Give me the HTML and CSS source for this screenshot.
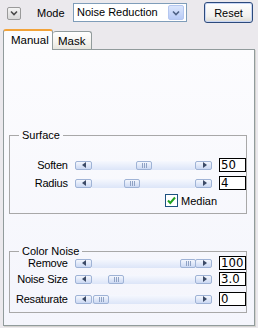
FILE: index.html
```html
<!DOCTYPE html>
<html>
<head>
<meta charset="utf-8">
<link rel="stylesheet" href="styles.css">
</head>
<body>
<div class="top">
  <div class="collapse"><svg width="8" height="6" viewBox="0 0 8 6"><path d="M1 1.5 L4 4.5 L7 1.5" fill="none" stroke="#4a4a4a" stroke-width="1.6"/></svg></div>
  <span class="mode">Mode</span>
  <div class="select"><span class="sel-text">Noise Reduction</span><span class="sel-btn"><svg width="8" height="6" viewBox="0 0 8 6"><path d="M1 1.5 L4 4.5 L7 1.5" fill="none" stroke="#4d6185" stroke-width="1.6"/></svg></span></div>
  <div class="reset">Reset</div>
</div>
<div class="tabs">
  <div class="tab active">Manual</div>
  <div class="tab">Mask</div>
</div>
<div class="panel">
  <fieldset class="group surface">
    <legend>Surface</legend>
    <div class="row">
      <span class="lbl">Soften</span>
      <div class="slider"><span class="arrow left"></span><span class="track"><span class="thumb" style="left:44px"></span></span><span class="arrow right"></span></div>
      <span class="num">50</span>
    </div>
    <div class="row">
      <span class="lbl">Radius</span>
      <div class="slider"><span class="arrow left"></span><span class="track"><span class="thumb" style="left:32px"></span></span><span class="arrow right"></span></div>
      <span class="num">4</span>
    </div>
    <div class="check-row">
      <span class="checkbox"><svg width="11" height="11" viewBox="0 0 11 11"><path d="M2 5.5 L4.3 8 L9 2.5" fill="none" stroke="#21a121" stroke-width="2"/></svg></span>
      <span class="check-lbl">Median</span>
    </div>
  </fieldset>
  <fieldset class="group color">
    <legend>Color Noise</legend>
    <div class="row first">
      <span class="lbl">Remove</span>
      <div class="slider"><span class="arrow left"></span><span class="track"><span class="thumb" style="left:88px"></span></span><span class="arrow right"></span></div>
      <span class="num">100</span>
    </div>
    <div class="row">
      <span class="lbl">Noise Size</span>
      <div class="slider"><span class="arrow left"></span><span class="track"><span class="thumb" style="left:16px"></span></span><span class="arrow right"></span></div>
      <span class="num">3.0</span>
    </div>
    <div class="row last">
      <span class="lbl">Resaturate</span>
      <div class="slider"><span class="arrow left"></span><span class="track"><span class="thumb" style="left:1px"></span></span><span class="arrow right"></span></div>
      <span class="num">0</span>
    </div>
  </fieldset>
</div>
</body>
</html>
```
FILE: styles.css
```css
* { box-sizing: border-box; }
html, body { margin: 0; padding: 0; }
body {
  width: 258px;
  height: 328px;
  background: #ebe9ed;
  font-family: "Liberation Sans", Arial, sans-serif;
  font-size: 11px;
  color: #000;
  overflow: hidden;
}
.top {
  display: flex;
  align-items: center;
  height: 25px;
}
.collapse {
  width: 14px;
  height: 13px;
  margin-left: 7px;
  margin-top: 1px;
  border: 1px solid #9a9a9a;
  border-radius: 2px;
  background: linear-gradient(#f4f4f4, #d8d8d8);
  display: flex;
  align-items: center;
  justify-content: center;
}
.mode {
  margin-left: 16px;
  width: 36px;
}
.select {
  width: 114px;
  height: 19px;
  border: 1px solid #7f9db9;
  background: #fff;
  display: flex;
  align-items: center;
  justify-content: space-between;
  padding: 0 2px 0 3px;
}
.sel-text { line-height: 15px; }
.sel-btn {
  width: 16px;
  height: 15px;
  border: 1px solid #b5c7f0;
  border-radius: 2px;
  background: linear-gradient(#dbe6fd, #b8cbf6);
  display: flex;
  align-items: center;
  justify-content: center;
}
.reset {
  margin-left: 17px;
  width: 49px;
  height: 21px;
  border: 1px solid #2c4a7c;
  border-radius: 3px;
  background: linear-gradient(#ffffff, #f2f1ee 70%, #dcdbd4);
  box-shadow: inset 0 0 0 1px #c8d6f4;
  display: flex;
  align-items: center;
  justify-content: center;
}
.tabs {
  display: flex;
  align-items: flex-end;
  height: 24px;
  padding-left: 3px;
  position: relative;
  z-index: 1;
}
.tab {
  height: 18px;
  border: 1px solid #919b9c;
  border-bottom: none;
  border-radius: 3px 3px 0 0;
  background: linear-gradient(#ffffff, #f4f3ef 60%, #e6e5de);
  line-height: 13px;
  font-size: 11.5px;
}
.tab.active {
  height: 21px;
  width: 50px;
  border-top: 2px solid #f2a33a;
  background: #fcfcfe;
  padding: 3px 0 0 7px;
  margin-bottom: -1px;
}
.tab:not(.active) {
  width: 39px;
  border-left: none;
  padding: 3px 0 0 5px;
}
.panel {
  margin-left: 3px;
  width: 252px;
  height: 277px;
  border: 1px solid #919b9c;
  background: linear-gradient(#fcfcfe, #f4f5fc);
  box-shadow: 1px 1px 0 #d4d3cf;
  padding-top: 79px;
}
.group {
  margin: 0 0 0 5px;
  width: 238px;
  border: 1px solid #a8a8a8;
  padding: 0;
  min-width: 0;
}
.group legend {
  margin-left: 9px;
  padding: 0 3px;
  line-height: 12px;
  font-size: 11px;
}
.surface {
  padding-top: 17px;
  padding-bottom: 6px;
}
.surface .row { margin-bottom: 4px; }
.color {
  margin-top: 32px;
  padding-bottom: 6px;
}
.color legend { line-height: 11px; }
.row {
  display: flex;
  align-items: center;
  height: 14px;
}
.row.first { margin-top: -1px; }
.color .row { margin-bottom: 2px; }
.color .row.last { margin-top: 6px; margin-bottom: 0; }
.lbl {
  width: 58px;
  text-align: right;
  letter-spacing: -0.2px;
  line-height: 11px;
}
.slider {
  margin-left: 7px;
  width: 138px;
  height: 9px;
  display: flex;
}
.arrow {
  width: 17px;
  height: 9px;
  border: 1px solid #9fb3d6;
  border-radius: 2px;
  background: linear-gradient(#f4f7fd, #cbd8f3);
  position: relative;
  flex: none;
}
.arrow::after {
  content: "";
  position: absolute;
  top: 0.5px;
  left: 6px;
  border-top: 3px solid transparent;
  border-bottom: 3px solid transparent;
}
.arrow.left::after { border-right: 4px solid #3c4a66; }
.arrow.right::after { border-left: 4px solid #3c4a66; left: 7px; }
.track {
  flex: 1;
  position: relative;
  background: linear-gradient(#f6f8fe, #dce5f8);
}
.thumb {
  position: absolute;
  top: 0;
  width: 16px;
  height: 9px;
  border: 1px solid #9fb3d6;
  border-radius: 2px;
  background:
    linear-gradient(90deg, transparent 5px, #8fa2c4 5px, #8fa2c4 6px, transparent 6px, transparent 7px, #8fa2c4 7px, #8fa2c4 8px, transparent 8px, transparent 9px, #8fa2c4 9px, #8fa2c4 10px, transparent 10px) no-repeat 0 1px / 100% 5px,
    linear-gradient(#f4f7fd, #cbd8f3);
}
.num {
  margin-left: 7px;
  width: 27px;
  height: 14px;
  border: 1px solid #000;
  background: #fff;
  font-family: "Liberation Sans Narrow", "DejaVu Sans Condensed", "Liberation Sans", sans-serif;
  font-size: 13px;
  line-height: 12px;
  padding-left: 1px;
}
.check-row {
  display: flex;
  align-items: center;
  height: 13px;
  margin-top: 2px;
  padding-left: 155px;
}
.checkbox {
  width: 13px;
  height: 13px;
  border: 1px solid #1c5180;
  background: #fff;
  display: flex;
  align-items: center;
  justify-content: center;
}
.check-lbl { margin-left: 3px; }
```
